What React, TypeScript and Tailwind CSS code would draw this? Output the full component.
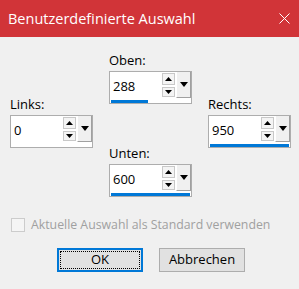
import React from "react";

type FieldProps = {
  label: string;
  value: string;
  fill: number;
};

function SpinField({ label, value, fill }: FieldProps) {
  return (
    <div className="flex flex-col">
      <div className="h-4 leading-4 text-[13px] text-black">{label}</div>
      <div className="mt-[3px] h-[33px] w-[83px] border border-[#adadad] bg-white flex flex-col">
        <div className="flex flex-1">
          <div className="flex-1 pl-[3px] pt-[6px] text-[13px] leading-4 text-black">{value}</div>
          <div className="flex flex-col justify-between pt-px pb-[3px] w-[14px]">
            <div className="h-[12px] w-[13px] border border-[#c8c8c8] bg-[#f4f4f4] flex items-center justify-center">
              <svg width="7" height="4" viewBox="0 0 7 4">
                <path d="M0 4 L3.5 0 L7 4 Z" fill="#000" />
              </svg>
            </div>
            <div className="h-[10px] w-[13px] border border-[#c8c8c8] bg-[#f4f4f4] flex items-center justify-center">
              <svg width="7" height="4" viewBox="0 0 7 4">
                <path d="M0 0 L3.5 4 L7 0 Z" fill="#000" />
              </svg>
            </div>
          </div>
          <div className="w-[15px] bg-[#f0f0f0] border-l border-white border-r border-r-[#a0a0a0] border-b border-b-[#a0a0a0] mb-[2px] flex items-center justify-center">
            <svg width="8" height="5" viewBox="0 0 8 5">
              <path d="M0 0 L4 5 L8 0 Z" fill="#000" />
            </svg>
          </div>
        </div>
        <div className="h-[3px] px-px">
          <div className="h-[3px] bg-[#0078d7]" style={{ width: `${fill}%` }} />
        </div>
      </div>
    </div>
  );
}

export default function App() {
  return (
    <div
      className="w-[299px] h-[289px] bg-[#f0f0f0] flex flex-col"
      style={{ fontFamily: '"Open Sans", "Noto Sans", sans-serif' }}
    >
      <div className="h-[37px] bg-[#d13438] flex items-center justify-between pl-2 pr-[9px] text-white">
        <span className="text-[14.5px] leading-5">Benutzerdefinierte Auswahl</span>
        <svg width="11" height="11" viewBox="0 0 11 11">
          <path d="M0.5 0.5 L10.5 10.5 M10.5 0.5 L0.5 10.5" stroke="#fff" strokeWidth="1" />
        </svg>
      </div>

      <div className="flex pl-[10px] gap-x-4">
        <div className="pt-[59px]">
          <SpinField label="Links:" value="0" fill={0} />
        </div>
        <div className="flex flex-col pt-[15px] gap-y-[41px]">
          <SpinField label="Oben:" value="288" fill={47} />
          <SpinField label="Unten:" value="600" fill={100} />
        </div>
        <div className="pt-[59px]">
          <SpinField label="Rechts:" value="950" fill={100} />
        </div>
      </div>

      <div className="flex items-center mt-[20px] pl-[11px] gap-x-[6px]">
        <div className="w-[14px] h-[14px] border border-[#cccccc] bg-[#f5f5f5]" />
        <span className="text-[12.3px] leading-4 text-[#a0a0a0]">Aktuelle Auswahl als Standard verwenden</span>
      </div>

      <div className="flex pl-[57px] gap-x-4 mt-[15px]">
        <div className="w-[86px] h-[24px] border-2 border-[#0078d7] bg-[#e1e1e1] p-px">
          <div className="h-full border border-dotted border-black flex items-center justify-center text-[13px] text-black">
            OK
          </div>
        </div>
        <div className="w-[86px] h-[24px] border border-[#adadad] bg-[#e1e1e1] flex items-center justify-center text-[13px] text-black">
          Abbrechen
        </div>
      </div>
    </div>
  );
}
